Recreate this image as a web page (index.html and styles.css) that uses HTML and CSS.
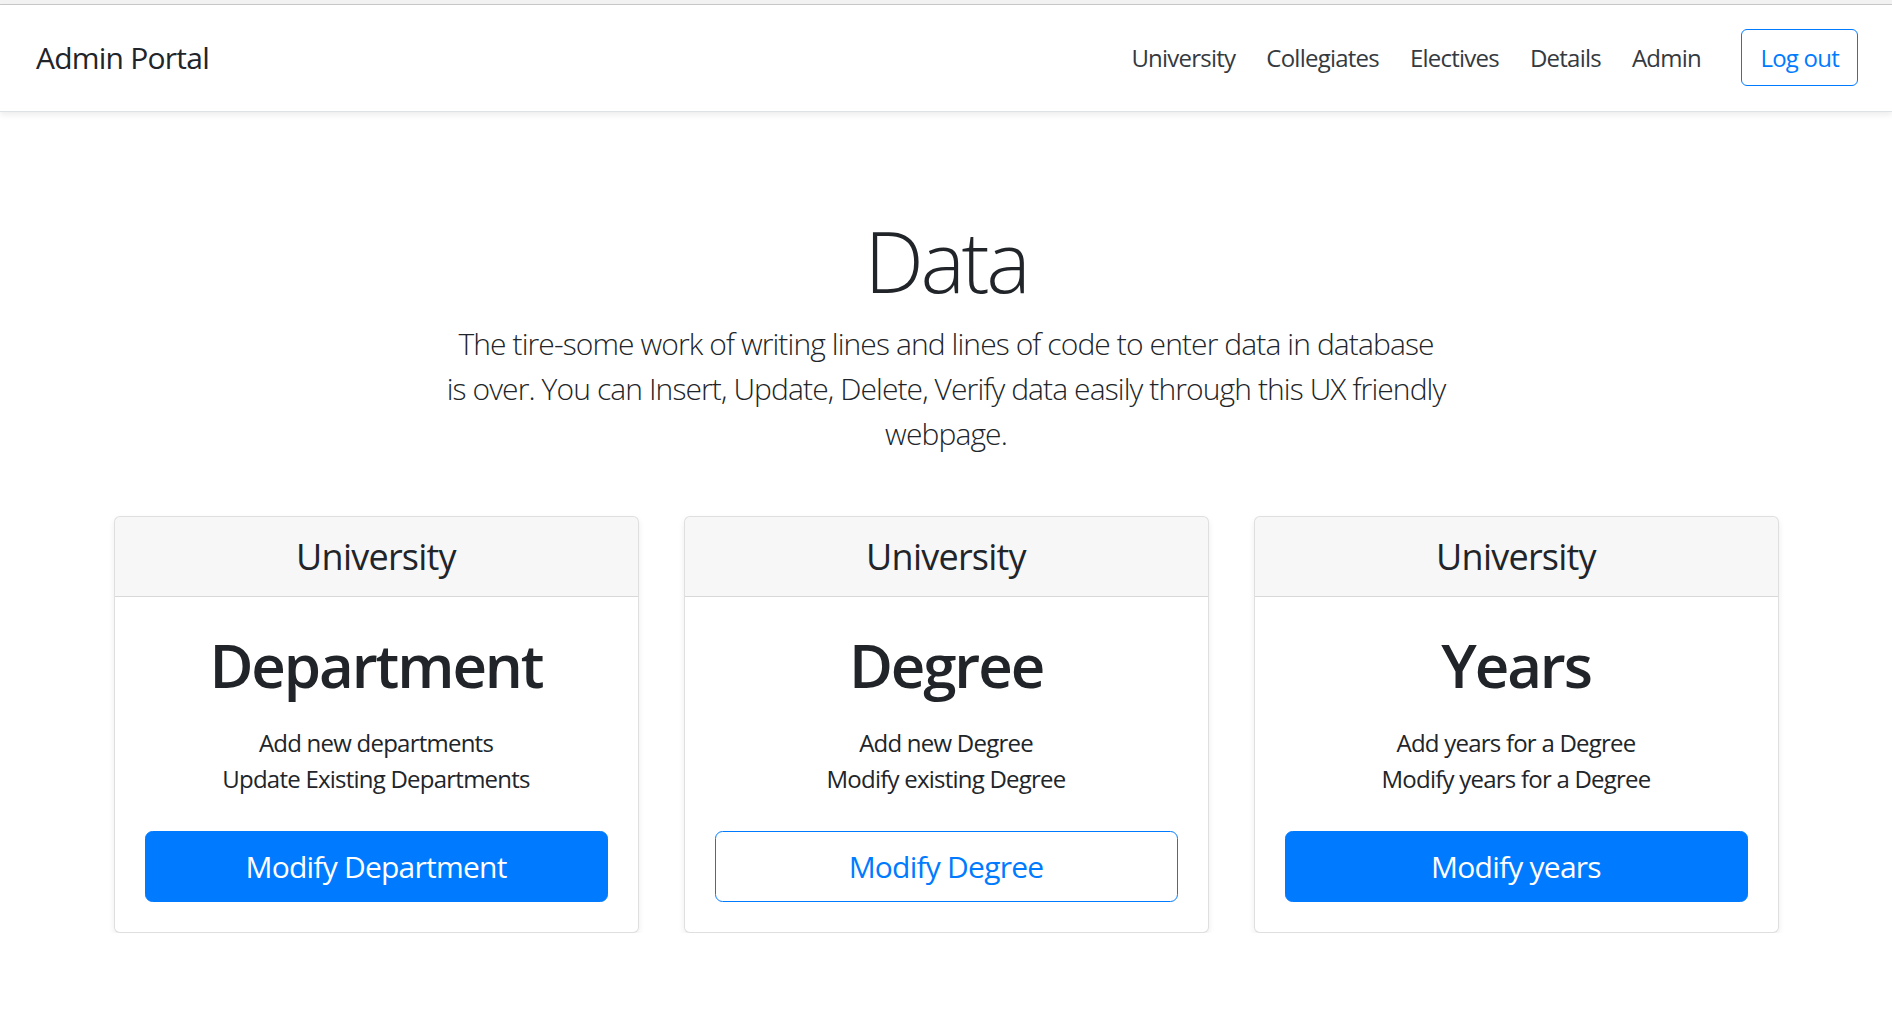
FILE: index.html
```html
<!DOCTYPE html>
<html lang="en">
<head>
<meta charset="utf-8">
<title>Admin Portal</title>
<link rel="stylesheet" href="styles.css">
</head>
<body>
<div class="topband"></div>
<header class="navbar">
  <h5 class="brand">Admin Portal</h5>
  <nav class="nav">
    <a class="nav-link" href="#">University</a>
    <a class="nav-link" href="#">Collegiates</a>
    <a class="nav-link" href="#">Electives</a>
    <a class="nav-link" href="#">Details</a>
    <a class="nav-link" href="#">Admin</a>
  </nav>
  <a class="btn btn-outline" href="#">Log out</a>
</header>

<section class="pricing-header">
  <h1 class="display">Data</h1>
  <p class="lead">The tire-some work of writing lines and lines of code to enter data in database<br>is over. You can Insert, Update, Delete, Verify data easily through this UX friendly webpage.</p>
</section>

<main class="container">
  <div class="card-deck">
    <div class="card">
      <div class="card-header"><h4>University</h4></div>
      <div class="card-body">
        <h1 class="card-title">Department</h1>
        <ul class="list">
          <li>Add new departments</li>
          <li>Update Existing Departments</li>
        </ul>
        <a class="btn-lg btn-primary" href="#">Modify Department</a>
      </div>
    </div>
    <div class="card">
      <div class="card-header"><h4>University</h4></div>
      <div class="card-body">
        <h1 class="card-title">Degree</h1>
        <ul class="list">
          <li>Add new Degree</li>
          <li>Modify existing Degree</li>
        </ul>
        <a class="btn-lg btn-outline-lg" href="#">Modify Degree</a>
      </div>
    </div>
    <div class="card">
      <div class="card-header"><h4>University</h4></div>
      <div class="card-body">
        <h1 class="card-title">Years</h1>
        <ul class="list">
          <li>Add years for a Degree</li>
          <li>Modify years for a Degree</li>
        </ul>
        <a class="btn-lg btn-primary" href="#">Modify years</a>
      </div>
    </div>
  </div>
</main>
</body>
</html>
```

FILE: styles.css
```css
* { box-sizing: border-box; }
html, body {
  margin: 0;
  padding: 0;
  background: #fff;
}
body {
  font-family: "Open Sans", "Noto Sans", "Liberation Sans", sans-serif;
  font-size: 24px;
  line-height: 1.5;
  letter-spacing: -0.032em;
  color: #212529;
}
.topband {
  height: 5px;
  background: #f2f2f2;
  border-bottom: 1px solid #c9c9c9;
}
.navbar {
  display: flex;
  align-items: center;
  padding: 24px 34px 25px 36px;
  background: #fff;
  border-bottom: 1px solid #dee2e6;
  box-shadow: 0 3px 6px rgba(0,0,0,.075);
  margin-bottom: 24px;
}
.brand {
  margin: 0 auto 0 0;
  font-size: 30px;
  font-weight: 400;
  line-height: 1.2;
  color: #212529;
}
.nav {
  display: flex;
  margin-right: 25px;
}
.nav-link {
  padding: 0 15.5px;
  color: #343a40;
  text-decoration: none;
  font-size: 24px;
}
.btn {
  display: inline-block;
  font-size: 24px;
  line-height: 1.5;
  padding: 9.5px 18px;
  border: 1px solid #007bff;
  border-radius: 6px;
  color: #007bff;
  text-decoration: none;
}
.pricing-header {
  max-width: 1088px;
  margin: 0 auto;
  padding: 75px 24px 36px;
  text-align: center;
}
.display {
  font-size: 84px;
  font-weight: 300;
  line-height: 1.2;
  letter-spacing: -0.04em;
  margin: 0 0 9px;
}
.lead {
  font-size: 30px;
  font-weight: 300;
  line-height: 1.5;
  letter-spacing: -0.03em;
  margin: 0;
}
.container {
  max-width: 1710px;
  margin: 24px auto 0;
  padding: 0 22.5px;
}
.card-deck {
  display: flex;
  gap: 45px;
}
.card {
  flex: 1 1 0;
  border: 1px solid rgba(0,0,0,.125);
  border-radius: 6px;
  box-shadow: 0 3px 6px rgba(0,0,0,.075);
  text-align: center;
  overflow: hidden;
  background: #fff;
}
.card-header {
  padding: 18px 30px;
  background: rgba(0,0,0,.03);
  border-bottom: 1px solid rgba(0,0,0,.125);
}
.card-header h4 {
  margin: 0;
  font-size: 36px;
  font-weight: 400;
  line-height: 1.2;
}
.card-body {
  padding: 32.5px 30px 30px;
}
.card-title {
  font-size: 60px;
  font-weight: 600;
  line-height: 1.2;
  letter-spacing: -0.035em;
  margin: 0 0 18px;
}
.list {
  list-style: none;
  padding: 0;
  margin: 24px 0 33.5px;
}
.btn-lg {
  display: block;
  font-size: 30px;
  line-height: 1.5;
  padding: 12px 24px;
  border: 1px solid #007bff;
  border-radius: 7.5px;
  text-decoration: none;
}
.btn-primary {
  background: #007bff;
  color: #fff;
}
.btn-outline-lg {
  background: #fff;
  color: #007bff;
}
```
